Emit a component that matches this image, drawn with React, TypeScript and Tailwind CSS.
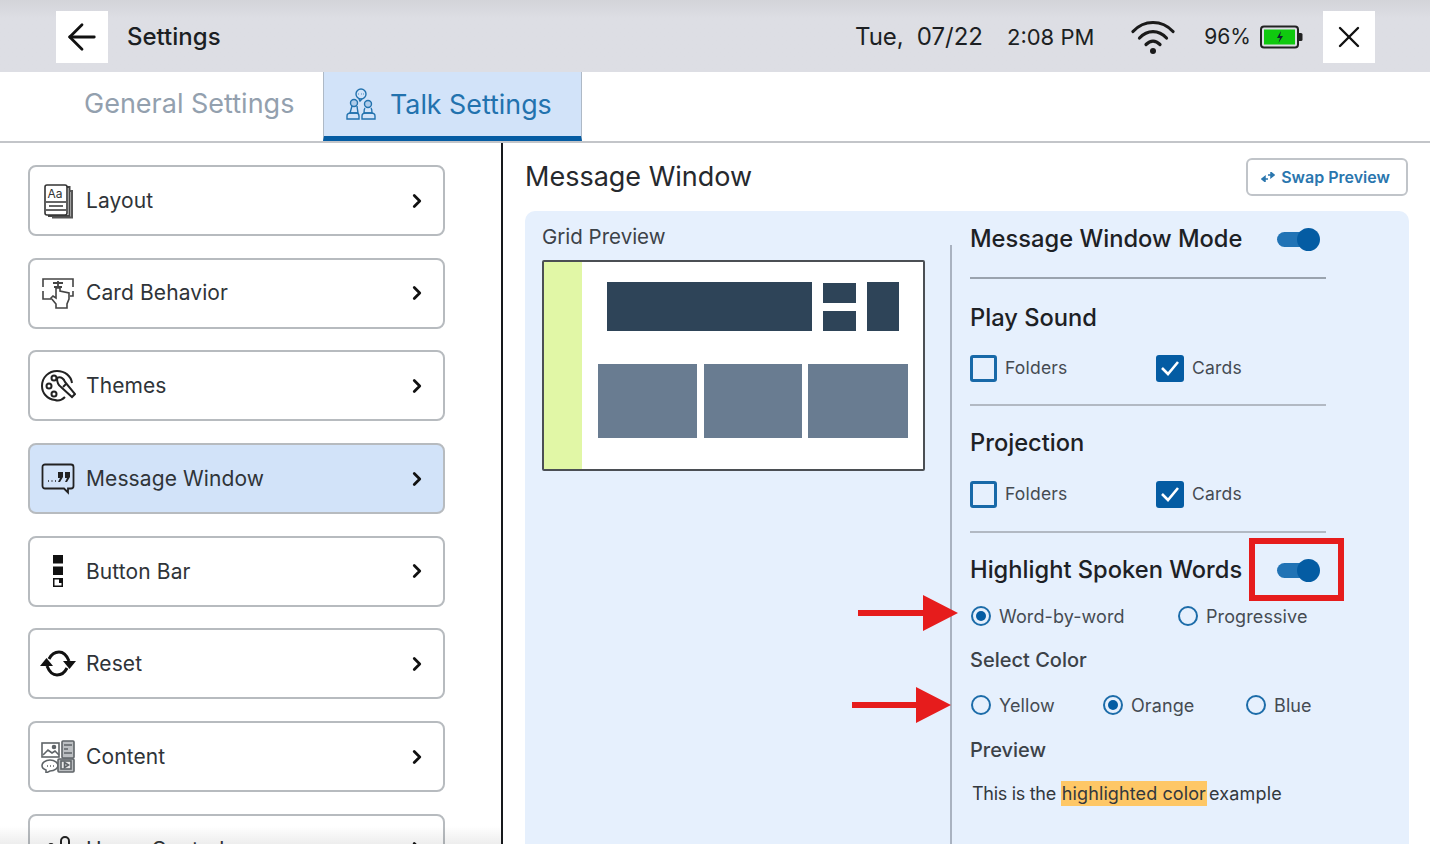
import { ArrowLeft, ChevronRight, X } from "lucide-react";
import type { ReactNode } from "react";

const font = { fontFamily: "Inter, 'Open Sans', sans-serif" };

function LayoutIcon() {
  return (
    <svg width="30" height="36" viewBox="0 0 30 36" fill="none" stroke="#333" strokeWidth="1.600">
      <path d="M24 4h2.500v29H6v-2" stroke="#444" strokeWidth="2" />
      <path d="M26.500 8H29v26.500H9" stroke="#555" strokeWidth="2" />
      <rect x="2" y="2" width="22" height="30" rx="2" fill="#fff" />
      <text x="4.500" y="15" fontSize="12" fill="#333" stroke="none">Aa</text>
      <path d="M3 19h20M6 23h14M3 27h20" strokeWidth="1.400" />
    </svg>
  );
}

function CardIcon() {
  return (
    <svg width="34" height="32" viewBox="0 0 34 32" fill="none" stroke="#444" strokeWidth="1.600">
      <path d="M2 10V2h30v8M32 14v5h-3M2 14v8h8" />
      <path d="M12 6h10M17 4v5M13 10h8" strokeWidth="1.800" />
      <path d="M15 11v10l-3-2-2 2 5 6v4h11v-4l2-5v-6l-9-2v-3z" fill="#fff" />
    </svg>
  );
}

function ThemesIcon() {
  return (
    <svg width="36" height="34" viewBox="0 0 36 34" fill="none" stroke="#222" strokeWidth="2">
      <path d="M25 28c-3 3-7 4-10 3C7 30 2 24 2 17 2 8 9 2 17 2c8 0 14 5 15 12" />
      <circle cx="9" cy="17" r="2.500" />
      <circle cx="14" cy="9" r="2.500" />
      <circle cx="14" cy="25" r="2.500" />
      <path d="M17 9c4-2 7 1 8 4l10 12-3 3-11-10c-3-2-4-6-4-9z" fill="#fff" />
      <path d="M23 18l3-3" />
    </svg>
  );
}

function MessageIcon() {
  return (
    <svg width="34" height="32" viewBox="0 0 34 32" fill="none" stroke="#222" strokeWidth="1.800">
      <path d="M4 1.500h26a2.500 2.500 0 0 1 2.500 2.500v19a2.500 2.500 0 0 1-2.500 2.500h-3v4l-4-4H4A2.500 2.500 0 0 1 1.500 23V4A2.500 2.500 0 0 1 4 1.500z" />
      <path d="M7 18h1M10.500 18h1M14 18h1" strokeWidth="1.600" />
      <path d="M17 9h5v5l-3 5h-2l2-4h-2zM24 9h5v5l-3 5h-2l2-4h-2z" fill="#222" stroke="none" />
    </svg>
  );
}

function ButtonBarIcon() {
  return (
    <svg width="12" height="32" viewBox="0 0 12 32" fill="#111">
      <rect x="1" y="0" width="10" height="8.500" />
      <rect x="1" y="11.500" width="10" height="8.500" />
      <path d="M1 23h10v9H1zM2.500 28v2.500h7V28H7v-3.500H2.500z" fillRule="evenodd" />
    </svg>
  );
}

function ResetIcon() {
  return (
    <svg width="36" height="27" viewBox="0 0 36 27" fill="none" stroke="#111" strokeWidth="3">
      <path d="M9 9c2-4 5-7 10-7 5 0 8 4 10 9" />
      <path d="M27 18c-2 4-5 7-10 7-5 0-8-4-10-9" />
      <path d="M0 16h13L6.500 8zM23 11h13l-6.500 8z" fill="#111" stroke="none" />
    </svg>
  );
}

function ContentIcon() {
  return (
    <svg width="34" height="33" viewBox="0 0 34 33" fill="none" stroke="#5f6468" strokeWidth="1.600">
      <rect x="1" y="3" width="17" height="14" />
      <path d="M2 15l5-5 4 3 3-2 4 4" />
      <circle cx="13" cy="7" r="1.500" fill="#5f6468" />
      <rect x="21" y="1" width="12" height="17" rx="1" fill="#bcbfc2" />
      <path d="M23 5h8M23 9h4M23 13h8" />
      <path d="M9 20c5 0 8 3 8 5.500S14 31 9 31l-4 2v-3c-3-1-4-3-4-4.500C1 23 4 20 9 20z" />
      <path d="M6 26h1M9 26h1M12 26h1" />
      <rect x="17" y="19" width="16" height="13" rx="1" fill="#bcbfc2" />
      <rect x="20" y="21" width="10" height="8" fill="#e8e8e8" />
      <path d="M23.500 22.500v5l4-2.500z" />
    </svg>
  );
}

function LockIcon() {
  return (
    <svg width="34" height="30" viewBox="0 0 34 30" fill="#222">
      <path d="M19 11V7a5 5 0 0 1 10 0v4h-2V7a3 3 0 0 0-6 0v4z" />
      <rect x="16" y="11" width="16" height="12" rx="1" />
      <circle cx="10" cy="12" r="3" />
    </svg>
  );
}

function TalkIcon() {
  return (
    <svg width="30" height="32" viewBox="0 0 30 32" fill="none" stroke="#2272ae" strokeWidth="1.400">
      <circle cx="15" cy="6" r="5" />
      <path d="M13 11l1 2 2-2" />
      <path d="M12.500 6h.5M15 6h.5M17 6h.5" />
      <circle cx="8" cy="15" r="3.500" fill="#2272ae" fillOpacity="0.200" />
      <path d="M6 18l-2 7h8l-1-7" />
      <path d="M1 31v-3c0-2 2-3 4-3h5c2 0 3 1 3 3v3z" />
      <circle cx="22" cy="16" r="3.500" fill="#2272ae" fillOpacity="0.200" />
      <path d="M19 20c-1 1-1 3-1 5h8c0-2 0-4-1-5" />
      <path d="M16 31v-3c0-2 2-3 4-3h5c2 0 4 1 4 3v3z" />
    </svg>
  );
}

function WifiIcon() {
  return (
    <svg width="44" height="35" viewBox="0 0 44 35" fill="none" stroke="#1a1a1a" strokeWidth="3.200" strokeLinecap="round">
      <path d="M2 11.500C13-.5 31-.5 42 11.500" />
      <path d="M8.500 18c8-8.500 19-8.500 27 0" />
      <path d="M15 24.500c4.500-4.500 9.500-4.500 14 0" />
      <circle cx="22" cy="31" r="3" fill="#1a1a1a" stroke="none" />
    </svg>
  );
}

function BatteryIcon() {
  return (
    <svg width="43" height="24" viewBox="0 0 43 24" fill="none">
      <rect x="1" y="1.500" width="37" height="21" rx="3" stroke="#222" strokeWidth="2" />
      <rect x="4" y="4.500" width="31" height="15" fill="#10c90f" />
      <path d="M39 8h2a1.500 1.500 0 0 1 1.500 1.500v5A1.500 1.500 0 0 1 41 16h-2z" fill="#222" />
      <path d="M21 6l-4 7h3l-1.500 5 4.500-7h-3z" fill="#123" />
    </svg>
  );
}

function SwapIcon() {
  return (
    <svg width="14" height="10" viewBox="0 0 14 10" fill="none" stroke="#2a76ae" strokeWidth="1.500">
      <path d="M7 3h5M10 0.500L13 3l-3 2.500z" fill="#2a76ae" />
      <path d="M7 7H2M4 4.500L1 7l3 2.500z" fill="#2a76ae" />
    </svg>
  );
}

function Toggle() {
  return (
    <div className="relative w-[43px] h-[28px] flex items-center">
      <div className="w-[38px] h-[15px] rounded-full bg-[#2173b5]" />
      <div className="absolute right-0 top-[2.500px] w-[23px] h-[23px] rounded-full bg-[#045ca3]" />
    </div>
  );
}

function Checkbox({ label, checked, width }: { label: string; checked?: boolean; width: string }) {
  return (
    <div className={`flex items-center h-[28px] ${width}`}>
      {checked ? (
        <div className="w-[28px] h-[27px] rounded-[3px] bg-[#045ca3] flex items-center justify-center">
          <svg width="22" height="18" viewBox="0 0 22 18" fill="none" stroke="#fff" strokeWidth="2.600">
            <path d="M3 9l6 6L19 3" />
          </svg>
        </div>
      ) : (
        <div className="w-[27px] h-[27px] rounded-[3px] border-[3px] border-[#1869a8]" />
      )}
      <span className="ml-[8px] pt-px text-[17.500px] text-[#454b52] tracking-[0.2px]">{label}</span>
    </div>
  );
}

function Radio({ label, checked, className }: { label: string; checked?: boolean; className: string }) {
  return (
    <div className={`flex items-center h-[28px] ${className}`}>
      <div className="w-[20px] h-[20px] rounded-full border-2 border-[#1c6ca9] flex items-center justify-center shrink-0">
        {checked && <div className="w-[10px] h-[10px] rounded-full bg-[#045ca3]" />}
      </div>
      <span className="ml-[8px] text-[18px] text-[#454b52] tracking-[0.1px] whitespace-nowrap">{label}</span>
    </div>
  );
}

function MenuItem({ icon, label, active }: { icon: ReactNode; label: string; active?: boolean }) {
  return (
    <div
      className={`h-[71px] shrink-0 rounded-[8px] border-2 border-[#b7bbbf] flex items-center pl-[10px] pr-[15px] ${
        active ? "bg-[#d2e3f9]" : "bg-white"
      }`}
    >
      <div className="w-[36px] flex items-center justify-center">{icon}</div>
      <span className="ml-[10px] flex-1 text-[21px] text-[#2f3438] tracking-[0.1px]">{label}</span>
      <ChevronRight size={22} strokeWidth={3} color="#111" />
    </div>
  );
}

function Heading({ children }: { children: ReactNode }) {
  return <div className="h-[28px] flex items-center text-[23.700px] font-medium text-[#1d2125] whitespace-nowrap">{children}</div>;
}

function SubHeading({ children, className }: { children: ReactNode; className: string }) {
  return <div className={`h-[28px] flex items-center text-[20px] font-medium text-[#3c4248] ${className}`}>{children}</div>;
}

export default function App() {
  return (
    <div className="relative w-[1430px] h-[844px] overflow-hidden bg-white flex flex-col" style={font}>
      <header className="h-[72px] shrink-0 bg-gradient-to-b from-[#d3d4d9] to-[#dddee4] to-[25%] flex items-center pl-[56px] pr-[55px] pt-[2px]">
        <button className="w-[52px] h-[52px] bg-white flex items-center justify-center">
          <ArrowLeft size={42} strokeWidth={1.600} color="#111" />
        </button>
        <span className="ml-[19px] text-[24px] font-medium text-[#1c1f23]">Settings</span>
        <div className="flex-1" />
        <span className="text-[24px] text-[#1c1f23] whitespace-nowrap">Tue,</span>
        <span className="ml-[13px] text-[24px] text-[#1c1f23] whitespace-nowrap">07/22</span>
        <span className="ml-[24px] text-[22px] text-[#1c1f23] whitespace-nowrap">2:08 PM</span>
        <div className="ml-[37px] flex"><WifiIcon /></div>
        <span className="ml-[29px] text-[21px] text-[#1c1f23]">96%</span>
        <div className="ml-[9px] flex"><BatteryIcon /></div>
        <button className="ml-[20px] w-[52px] h-[52px] bg-white flex items-center justify-center">
          <X size={36} strokeWidth={1.600} color="#111" />
        </button>
      </header>

      <div className="h-[71px] shrink-0 flex border-b-2 border-[#c3c5c9]">
        <div className="w-[323px] pl-[84px] pb-[4px] flex items-center text-[27px] text-[#93a0ae]">General Settings</div>
        <div className="w-[259px] bg-[#d2e3f9] border-x border-[#aeb9c6] border-b-[5px] border-b-[#045ca3] flex items-center pl-[22px]">
          <TalkIcon />
          <span className="ml-[14px] text-[26.800px] text-[#2272ae] whitespace-nowrap">Talk Settings</span>
        </div>
      </div>

      <div className="flex flex-1 min-h-0">
        <aside className="w-[501px] shrink-0 pl-[28px] pr-[56px] pt-[22px] flex flex-col gap-[21.700px]">
          <MenuItem icon={<LayoutIcon />} label="Layout" />
          <MenuItem icon={<CardIcon />} label="Card Behavior" />
          <MenuItem icon={<ThemesIcon />} label="Themes" />
          <MenuItem icon={<MessageIcon />} label="Message Window" active />
          <MenuItem icon={<ButtonBarIcon />} label="Button Bar" />
          <MenuItem icon={<ResetIcon />} label="Reset" />
          <MenuItem icon={<ContentIcon />} label="Content" />
          <MenuItem icon={<LockIcon />} label="Home Controls" />
        </aside>

        <main className="flex-1 min-w-0 border-l-2 border-[#17191c] pl-[22px] pr-[21px] flex flex-col">
          <div className="mt-[15px] h-[38px] shrink-0 flex items-center justify-between">
            <h1 className="text-[27px] text-[#26292d]">Message Window</h1>
            <button className="mr-px w-[162px] h-[38px] rounded-[6px] border-2 border-[#c0c4c9] flex items-center justify-center gap-[6px] pr-[3px] text-[16px] font-semibold text-[#2a76ae]">
              <SwapIcon />
              Swap Preview
            </button>
          </div>

          <div className="mt-[15px] flex-1 rounded-t-[10px] bg-[#e6f0fd] flex">
            <div className="w-[425px] shrink-0 pl-[17px]">
              <div className="h-[28px] mt-[12px] flex items-center text-[20.500px] text-[#3c4248]">Grid Preview</div>
              <div className="mt-[9px] w-[383px] h-[211px] bg-white border-2 border-[#4b4f54] rounded-[2px] flex">
                <div className="w-[38px] bg-[#e1f7a6]" />
                <div className="flex-1 flex flex-col">
                  <div className="mt-[20px] ml-[25px] flex h-[49px]">
                    <div className="w-[205px] bg-[#2e4458]" />
                    <div className="ml-[11px] w-[33px] flex flex-col justify-between pt-px">
                      <div className="h-[20px] bg-[#2e4458]" />
                      <div className="h-[20px] bg-[#2e4458]" />
                    </div>
                    <div className="ml-[11px] w-[32px] bg-[#2e4458]" />
                  </div>
                  <div className="mt-[33px] ml-[16px] flex h-[74px]">
                    <div className="w-[99px] bg-[#697c91]" />
                    <div className="ml-[7px] w-[98px] bg-[#697c91]" />
                    <div className="ml-[6px] w-[100px] bg-[#697c91]" />
                  </div>
                </div>
              </div>
            </div>

            <div className="w-[2px] mt-[34px] bg-[#a9b2c0]" />

            <div className="pl-[18px] flex-1">
              <div className="h-[56px] flex items-center w-[350px] justify-between">
                <Heading>Message Window Mode</Heading>
                <Toggle />
              </div>
              <div className="mt-[10px] w-[356px] h-[2px] bg-[#9aa3ae]" />
              <div className="mt-[25px]"><Heading>Play Sound</Heading></div>
              <div className="mt-[22px] flex">
                <Checkbox label="Folders" width="w-[186px]" />
                <Checkbox label="Cards" checked width="w-[150px]" />
              </div>
              <div className="mt-[22px] w-[356px] h-[2px] bg-[#b2b9c3]" />
              <div className="mt-[23px]"><Heading>Projection</Heading></div>
              <div className="mt-[23px] flex">
                <Checkbox label="Folders" width="w-[186px]" />
                <Checkbox label="Cards" checked width="w-[150px]" />
              </div>
              <div className="mt-[23px] w-[356px] h-[2px] bg-[#b2b9c3]" />
              <div className="mt-[23px] flex w-[350px] justify-between">
                <Heading>Highlight Spoken Words</Heading>
                <Toggle />
              </div>
              <div className="mt-[18px] flex">
                <Radio label="Word-by-word" checked className="w-[208px] pl-px" />
                <Radio label="Progressive" className="w-[150px]" />
              </div>
              <SubHeading className="mt-[16px]">Select Color</SubHeading>
              <div className="mt-[17px] flex">
                <Radio label="Yellow" className="w-[133px] pl-px" />
                <Radio label="Orange" checked className="w-[143px]" />
                <Radio label="Blue" className="w-[90px]" />
              </div>
              <SubHeading className="mt-[17px]">Preview</SubHeading>
              <div className="mt-[15px] h-[28px] pl-[2px] flex items-center text-[18px] text-[#33383d] whitespace-nowrap">
                <span className="tracking-[-0.3px]">This is the</span>
                <span className="ml-[5px] mr-[2px] h-[25px] px-px flex items-center bg-[#fec766] tracking-[0.1px]">highlighted color</span>
                <span className="tracking-[0.2px]">example</span>
              </div>
            </div>
          </div>
        </main>
      </div>

      {/* annotations and edge fade on top of the screenshot */}
      <div className="absolute left-0 bottom-0 w-[501px] h-[18px] bg-gradient-to-b from-transparent to-[#00000012]" />
      <div className="absolute left-[1249px] top-[538px] w-[95px] h-[63px] border-[6px] border-[#e61c1c]" />
      <svg className="absolute left-[858px] top-[595px]" width="102" height="36" viewBox="0 0 102 36" fill="#e61c1c">
        <path d="M0 15h65V0l35 18-35 18V21H0z" />
      </svg>
      <svg className="absolute left-[852px] top-[687px]" width="100" height="36" viewBox="0 0 100 36" fill="#e61c1c">
        <path d="M0 15h64V0l35 18-35 18V21H0z" />
      </svg>
    </div>
  );
}
